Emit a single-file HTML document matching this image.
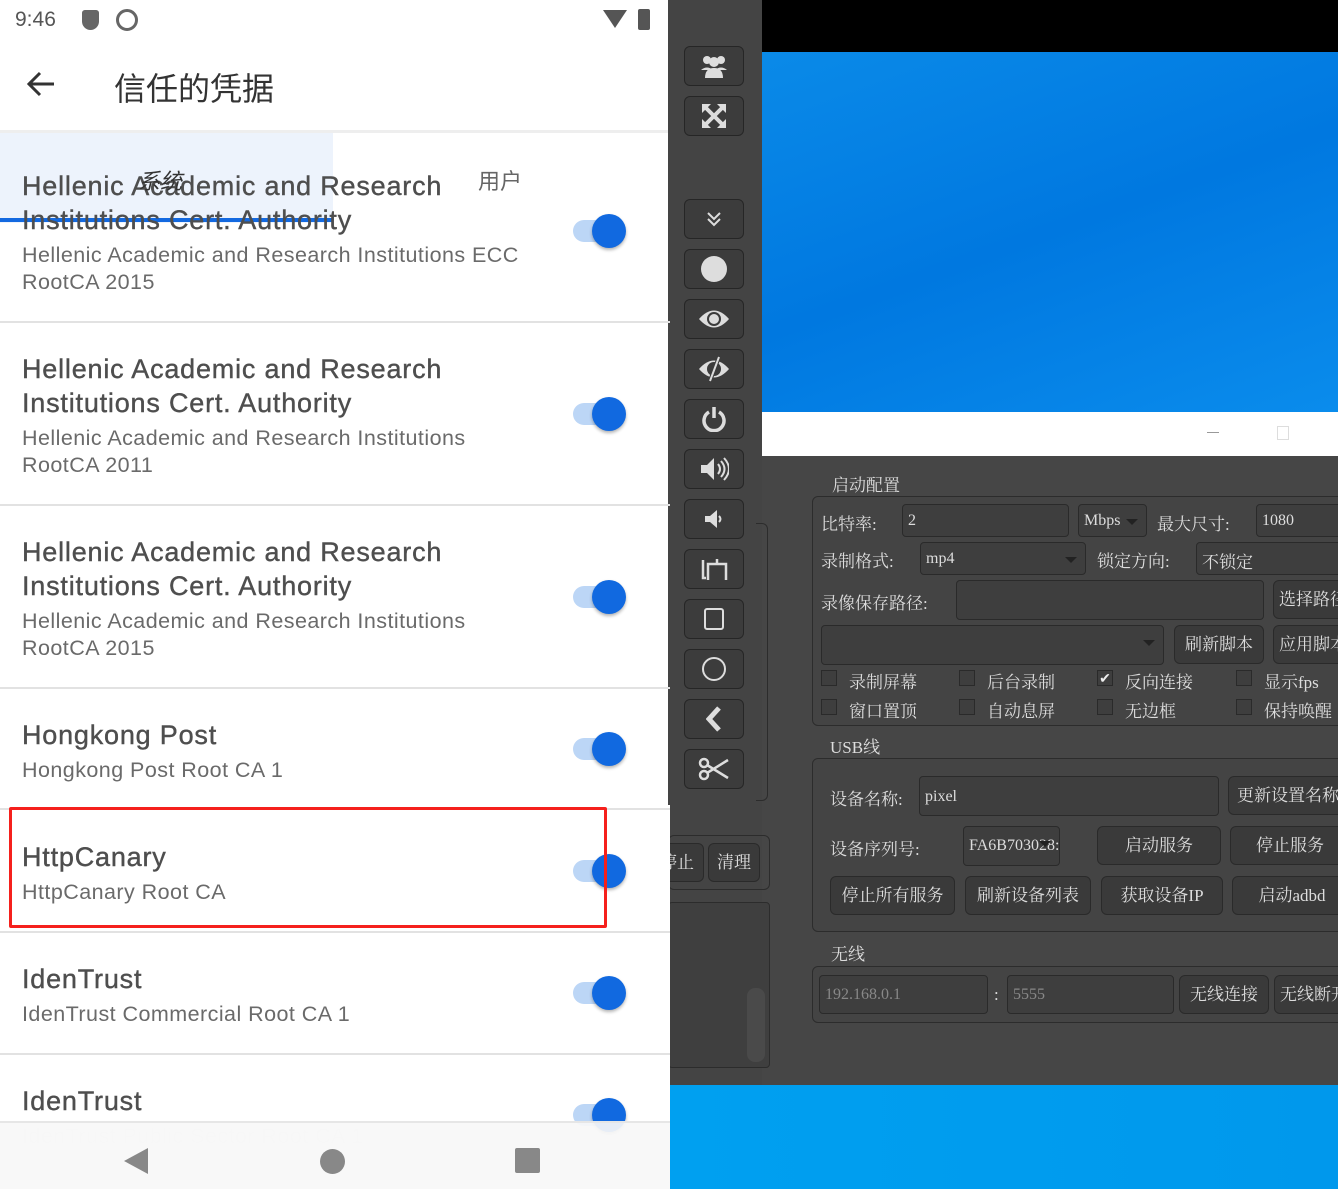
<!DOCTYPE html>
<html><head><meta charset="utf-8"><style>
*{margin:0;padding:0;box-sizing:border-box}
body{width:1338px;height:1189px;position:relative;overflow:hidden;background:#464646;font-family:"Liberation Sans","Noto Sans CJK SC",sans-serif}
.a{position:absolute}
.ph{left:0;top:0;width:668px;height:1189px;background:#fff}
.t{position:absolute;left:22px;font-size:27px;color:#4e4e4e;line-height:34px;letter-spacing:0.8px;-webkit-text-stroke:0.4px #4e4e4e}
.s{position:absolute;left:22px;font-size:21.5px;color:#6a6a6a;line-height:27px;letter-spacing:0.45px}
.hr{position:absolute;left:0;width:670px;height:2px;background:#e2e2e2}
.tg{position:absolute;left:573px;width:48px;height:22px;border-radius:11px;background:#bcd6f6}
.tg::after{content:"";position:absolute;left:19px;top:-6px;width:34px;height:34px;border-radius:50%;background:#1169e0;box-shadow:0 2px 3px rgba(0,0,0,.3)}
.bt{position:absolute;left:684px;width:60px;height:40px;border-radius:6px;background:#3c3c3c;border:1px solid #262626;color:#ddd;display:flex;align-items:center;justify-content:center;font-size:22px}
.d{font-family:"Liberation Serif","Noto Serif CJK SC",serif;color:#ddd;font-size:17px;position:absolute;white-space:nowrap}
.box{position:absolute;border:1px solid #2c2c2c;border-radius:6px;background:#444}
.in{position:absolute;border:1px solid #2a2a2a;border-radius:4px;background:#3e3e3e;height:33px;color:#ddd;font-family:"Liberation Serif","Noto Serif CJK SC",serif;font-size:16px;padding:7px 5px;white-space:nowrap;overflow:hidden}
.b{position:absolute;border:1px solid #2a2a2a;border-radius:6px;background:#3a3a3a;height:39px;color:#ddd;font-family:"Liberation Serif","Noto Serif CJK SC",serif;font-size:17px;text-align:center;line-height:37px;white-space:nowrap;overflow:hidden}
.cb{position:absolute;width:16px;height:16px;border:1px solid #2a2a2a;background:#3e3e3e}
.dd::after{content:"";position:absolute;right:8px;top:14px;border:6px solid transparent;border-top:6px solid #222}
svg{display:block}
</style></head><body>
<div class="a" style="left:762px;top:0;width:576px;height:52px;background:#000"></div>
<div class="a" style="left:762px;top:52px;width:576px;height:360px;background:linear-gradient(160deg,#0a8ae8,#0078e0 50%,#0a8cec)"></div>
<div class="a" style="left:762px;top:412px;width:576px;height:44px;background:#fff"></div>
<div class="a" style="left:1207px;top:432px;width:12px;height:1px;background:#999"></div>
<div class="a" style="left:1277px;top:426px;width:12px;height:14px;border:1px solid #ddd"></div>
<div class="a" style="left:670px;top:1085px;width:668px;height:104px;background:linear-gradient(90deg,#00a0f0,#0098ec)"></div>
<div class="a" style="left:668px;top:0;width:94px;height:1085px;background:#444"></div>

<div class="bt" style="top:46px"><svg width="28" height="24" viewBox="0 0 28 24"><circle cx="7" cy="6" r="4" fill="#ddd"/><circle cx="21" cy="6" r="4" fill="#ddd"/><circle cx="14" cy="8" r="5" fill="#ddd"/><path d="M1 16q6-5 12 0M15 16q6-5 12 0" fill="#ddd"/><path d="M5 24q0-10 9-10t9 10z" fill="#ddd"/></svg></div>
<div class="bt" style="top:96px"><svg width="26" height="26" viewBox="0 0 26 26" stroke="#ddd" stroke-width="4" fill="#ddd"><path d="M5 5L21 21M21 5L5 21"/><path d="M1 1h9L1 10zM25 1h-9l9 9zM1 25h9L1 16zM25 25h-9l9-9z" stroke="none"/></svg></div>
<div class="bt" style="top:199px"><svg width="16" height="16" viewBox="0 0 16 16" stroke="#ddd" stroke-width="2" fill="none"><path d="M2 2l6 6 6-6M2 8l6 6 6-6"/></svg></div>
<div class="bt" style="top:249px"><span style="width:26px;height:26px;border-radius:50%;background:#ddd"></span></div>
<div class="bt" style="top:299px"><svg width="32" height="22" viewBox="0 0 32 22"><path d="M1 11Q16-6 31 11Q16 28 1 11z" fill="#ddd"/><circle cx="16" cy="11" r="7" fill="#3c3c3c"/><circle cx="16" cy="11" r="5" fill="#ddd"/></svg></div>
<div class="bt" style="top:349px"><svg width="32" height="26" viewBox="0 0 32 26"><path d="M1 13Q16-4 31 13Q16 30 1 13z" fill="#ddd"/><circle cx="16" cy="13" r="7" fill="#3c3c3c"/><path d="M12 25L21 1" stroke="#3c3c3c" stroke-width="4"/><path d="M12 25L21 1" stroke="#ddd" stroke-width="2"/></svg></div>
<div class="bt" style="top:399px"><svg width="26" height="26" viewBox="0 0 26 26" stroke="#ddd" stroke-width="3.5" fill="none"><path d="M8 6A10 10 0 1 0 18 6"/><path d="M13 1v11"/></svg></div>
<div class="bt" style="top:449px"><svg width="30" height="26" viewBox="0 0 30 26"><path d="M2 9h6l7-7v22l-7-7H2z" fill="#ddd"/><path d="M19 8q4 5 0 10M22 5q7 8 0 16M25 2q10 11 0 22" stroke="#ddd" stroke-width="2" fill="none"/></svg></div>
<div class="bt" style="top:499px"><svg width="22" height="22" viewBox="0 0 22 22"><path d="M2 8h5l7-6v18l-7-6H2z" fill="#ddd"/><path d="M16 8q3 3 0 6" stroke="#ddd" stroke-width="2" fill="none"/></svg></div>
<div class="bt" style="top:549px"><svg width="30" height="26" viewBox="0 0 30 26" stroke="#ddd" stroke-width="2.5" fill="none"><path d="M4 4v18h3M9 24V8h18v16M18 8V3"/></svg></div>
<div class="bt" style="top:599px"><span style="width:20px;height:22px;border:2px solid #ddd;border-radius:3px"></span></div>
<div class="bt" style="top:649px"><span style="width:24px;height:24px;border:2px solid #ddd;border-radius:50%"></span></div>
<div class="bt" style="top:699px"><svg width="16" height="26" viewBox="0 0 16 26"><path d="M13 2L3 13l10 11" stroke="#ddd" stroke-width="5" fill="none"/></svg></div>
<div class="bt" style="top:749px"><svg width="32" height="24" viewBox="0 0 32 24" stroke="#ddd" stroke-width="2.5" fill="none"><circle cx="6" cy="6" r="4"/><circle cx="6" cy="18" r="4"/><path d="M9 8l21 13M9 16L30 3"/></svg></div>
<div class="a" style="left:756px;top:523px;width:12px;height:278px;border:1px solid #2c2c2c;border-left:none;border-radius:0 6px 6px 0"></div>
<div class="a" style="left:668px;top:835px;width:102px;height:55px;border:1px solid #2c2c2c;border-radius:6px"></div>
<div class="b" style="left:650px;top:843px;width:54px">停止</div>
<div class="b" style="left:708px;top:843px;width:52px">清理</div>
<div class="a" style="left:668px;top:902px;width:102px;height:166px;border:1px solid #2c2c2c;border-radius:4px;background:#3f3f3f"></div>
<div class="a" style="left:747px;top:988px;width:18px;height:74px;border-radius:8px;background:#4a4a4a"></div>

<div class="d" style="left:832px;top:471px">启动配置</div>
<div class="box" style="left:812px;top:496px;width:540px;height:230px"></div>
<div class="d" style="left:821px;top:510px">比特率:</div>
<div class="in" style="left:902px;top:504px;width:167px">2</div>
<div class="in dd" style="left:1078px;top:504px;width:69px">Mbps</div>
<div class="d" style="left:1157px;top:510px">最大尺寸:</div>
<div class="in" style="left:1256px;top:504px;width:100px">1080</div>
<div class="d" style="left:821px;top:547px">录制格式:</div>
<div class="in dd" style="left:920px;top:542px;width:166px">mp4</div>
<div class="d" style="left:1097px;top:547px">锁定方向:</div>
<div class="in" style="left:1196px;top:542px;width:160px;font-size:17px;padding-top:5px">不锁定</div>
<div class="d" style="left:821px;top:589px">录像保存路径:</div>
<div class="in" style="left:956px;top:580px;width:308px;height:40px"></div>
<div class="b" style="left:1273px;top:580px;width:80px">选择路径</div>
<div class="in dd" style="left:821px;top:625px;width:343px;height:40px"></div>
<div class="b" style="left:1174px;top:625px;width:90px">刷新脚本</div>
<div class="b" style="left:1273px;top:625px;width:80px">应用脚本</div>
<div class="cb" style="left:821px;top:670px"></div><div class="d" style="left:849px;top:668px">录制屏幕</div>
<div class="cb" style="left:959px;top:670px"></div><div class="d" style="left:987px;top:668px">后台录制</div>
<div class="cb" style="left:1097px;top:670px;color:#eee;font-size:14px;line-height:14px;text-align:center">✔</div><div class="d" style="left:1125px;top:668px">反向连接</div>
<div class="cb" style="left:1236px;top:670px"></div><div class="d" style="left:1264px;top:668px">显示fps</div>
<div class="cb" style="left:821px;top:699px"></div><div class="d" style="left:849px;top:697px">窗口置顶</div>
<div class="cb" style="left:959px;top:699px"></div><div class="d" style="left:987px;top:697px">自动息屏</div>
<div class="cb" style="left:1097px;top:699px"></div><div class="d" style="left:1125px;top:697px">无边框</div>
<div class="cb" style="left:1236px;top:699px"></div><div class="d" style="left:1264px;top:697px">保持唤醒</div>

<div class="d" style="left:830px;top:733px">USB线</div>
<div class="box" style="left:812px;top:758px;width:540px;height:174px"></div>
<div class="d" style="left:830px;top:785px">设备名称:</div>
<div class="in" style="left:919px;top:776px;width:300px;height:40px;padding-top:11px">pixel</div>
<div class="b" style="left:1228px;top:776px;width:120px">更新设置名称</div>
<div class="d" style="left:830px;top:835px">设备序列号:</div>
<div class="in dd" style="left:963px;top:826px;width:97px;height:40px;padding-top:10px">FA6B703028:</div>
<div class="b" style="left:1097px;top:826px;width:124px">启动服务</div>
<div class="b" style="left:1230px;top:826px;width:120px">停止服务</div>
<div class="b" style="left:830px;top:876px;width:125px">停止所有服务</div>
<div class="b" style="left:965px;top:876px;width:126px">刷新设备列表</div>
<div class="b" style="left:1101px;top:876px;width:122px">获取设备IP</div>
<div class="b" style="left:1232px;top:876px;width:120px">启动adbd</div>

<div class="d" style="left:831px;top:940px">无线</div>
<div class="box" style="left:812px;top:966px;width:540px;height:57px"></div>
<div class="in" style="left:819px;top:975px;width:169px;height:39px;color:#888;padding-top:10px">192.168.0.1</div>
<div class="d" style="left:994px;top:985px">:</div>
<div class="in" style="left:1007px;top:975px;width:167px;height:39px;color:#888;padding-top:10px">5555</div>
<div class="b" style="left:1179px;top:975px;width:90px">无线连接</div>
<div class="b" style="left:1274px;top:975px;width:80px">无线断开</div>

<div class="a ph" style="height:805px"></div>
<div class="a" style="left:0;top:805px;width:670px;height:384px;background:#fff"></div>
<div class="a" style="left:15px;top:8px;font-size:21px;color:#555">9:46</div>
<div class="a" style="left:82px;top:10px;width:17px;height:20px;background:#666;border-radius:3px 3px 9px 9px"></div>
<div class="a" style="left:116px;top:9px;width:22px;height:22px;border:3px solid #666;border-radius:50%"></div>
<div class="a" style="left:603px;top:10px;width:0;height:0;border-left:12px solid transparent;border-right:12px solid transparent;border-top:18px solid #555"></div>
<div class="a" style="left:638px;top:9px;width:12px;height:21px;background:#555;border-radius:2px"></div>
<svg class="a" style="left:26px;top:70px" width="30" height="28" viewBox="0 0 30 28" stroke="#333" stroke-width="3" fill="none"><path d="M28 14H4M14 3L3 14l11 11"/></svg>
<div class="a" style="left:114px;top:64px;font-size:32px;color:#333">信任的凭据</div>
<div class="a" style="left:0;top:130px;width:668px;height:3px;background:#eee"></div>
<div class="a" style="left:0;top:133px;width:333px;height:90px;background:#e8f0fb;opacity:.8"></div>
<div class="a" style="left:0;top:218px;width:333px;height:4px;background:#1369e0"></div>
<div class="a" style="left:138px;top:164px;font-size:22px;color:#333;font-style:italic;z-index:2">系统</div>
<div class="a" style="left:478px;top:164px;font-size:22px;color:#666">用户</div>

<div class="t" style="top:169px">Hellenic Academic and Research<br>Institutions Cert. Authority</div>
<div class="s" style="top:242px">Hellenic Academic and Research Institutions ECC<br>RootCA 2015</div>
<div class="tg" style="top:220px"></div>
<div class="hr" style="top:321px"></div>
<div class="t" style="top:352px">Hellenic Academic and Research<br>Institutions Cert. Authority</div>
<div class="s" style="top:425px">Hellenic Academic and Research Institutions<br>RootCA 2011</div>
<div class="tg" style="top:403px"></div>
<div class="hr" style="top:504px"></div>
<div class="t" style="top:535px">Hellenic Academic and Research<br>Institutions Cert. Authority</div>
<div class="s" style="top:608px">Hellenic Academic and Research Institutions<br>RootCA 2015</div>
<div class="tg" style="top:586px"></div>
<div class="hr" style="top:687px"></div>
<div class="t" style="top:718px">Hongkong Post</div>
<div class="s" style="top:757px">Hongkong Post Root CA 1</div>
<div class="tg" style="top:738px"></div>
<div class="hr" style="top:808px"></div>
<div class="t" style="top:840px">HttpCanary</div>
<div class="s" style="top:879px">HttpCanary Root CA</div>
<div class="tg" style="top:860px"></div>
<div class="a" style="left:9px;top:807px;width:598px;height:121px;border:3px solid #f5201c;border-radius:2px"></div>
<div class="hr" style="top:931px"></div>
<div class="t" style="top:962px">IdenTrust</div>
<div class="s" style="top:1001px">IdenTrust Commercial Root CA 1</div>
<div class="tg" style="top:982px"></div>
<div class="hr" style="top:1053px"></div>
<div class="t" style="top:1084px">IdenTrust</div>
<div class="s" style="top:1123px;color:#eee">IdenTrust Public Sector Root CA 1</div>
<div class="tg" style="top:1104px"></div>
<div class="a" style="left:0;top:1121px;width:670px;height:68px;background:rgba(248,248,248,.93);border-top:2px solid #e6e6e6"></div>
<div class="a" style="left:124px;top:1148px;width:0;height:0;border-top:13px solid transparent;border-bottom:13px solid transparent;border-right:24px solid #888"></div>
<div class="a" style="left:320px;top:1149px;width:25px;height:25px;border-radius:50%;background:#888"></div>
<div class="a" style="left:515px;top:1148px;width:25px;height:25px;border-radius:2px;background:#888"></div>
</body></html>
